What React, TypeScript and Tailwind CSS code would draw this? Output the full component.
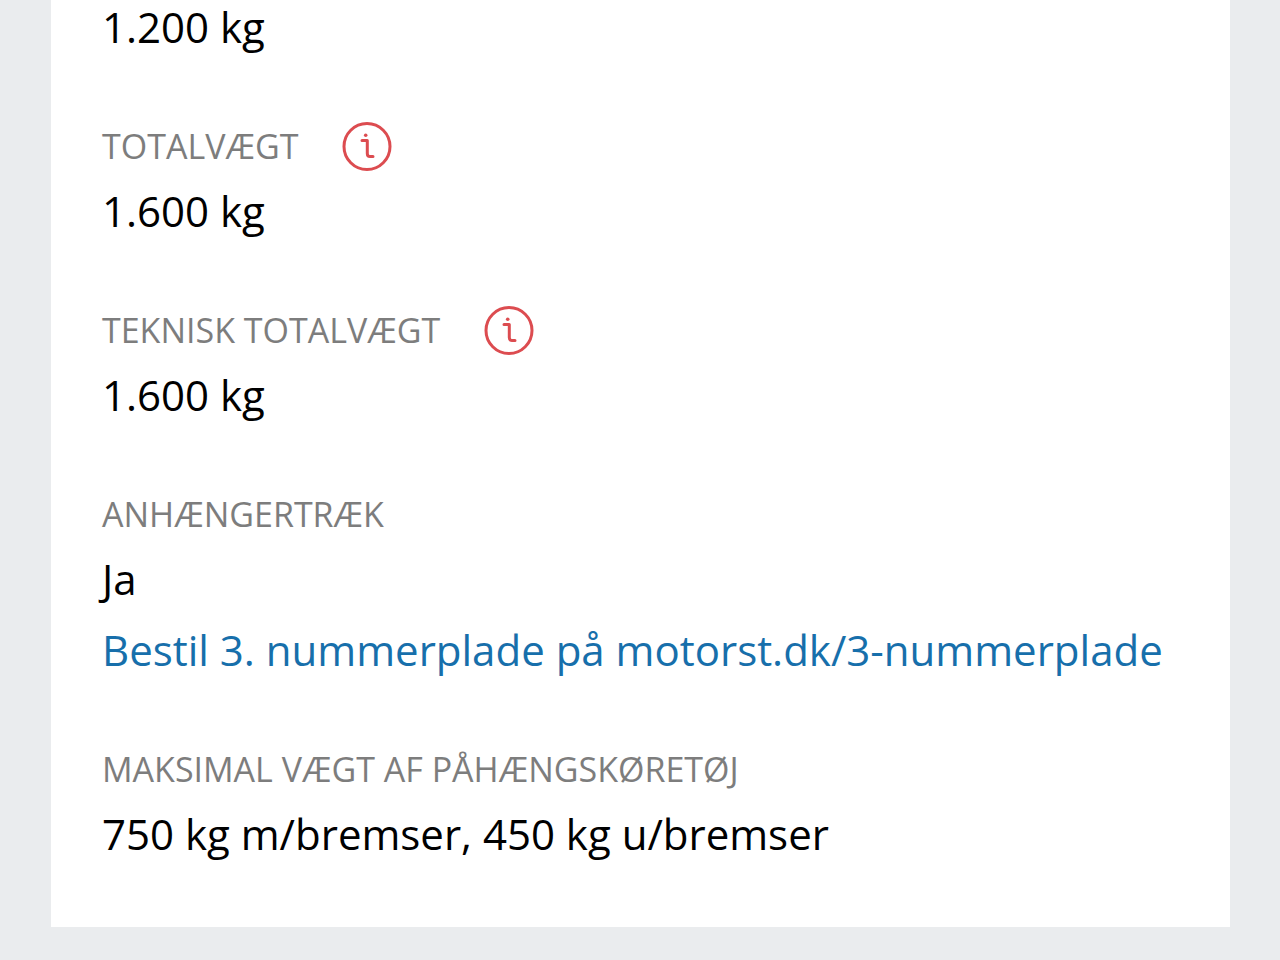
interface Field {
  id: string;
  label: string;
  value: string;
  hasInfo?: boolean;
  link?: { text: string; href: string };
}

const fields: Field[] = [
  { id: 'totalvaegt', label: 'Totalvægt', value: '1.600 kg', hasInfo: true },
  { id: 'teknisk-totalvaegt', label: 'Teknisk totalvægt', value: '1.600 kg', hasInfo: true },
  {
    id: 'anhaengertraek',
    label: 'Anhængertræk',
    value: 'Ja',
    link: {
      text: 'Bestil 3. nummerplade på motorst.dk/3-nummerplade',
      href: 'https://motorst.dk/3-nummerplade',
    },
  },
  {
    id: 'paahaengskoeretoej',
    label: 'Maksimal vægt af påhængskøretøj',
    value: '750 kg m/bremser, 450 kg u/bremser',
  },
];

function InfoIcon() {
  return (
    <svg viewBox="0 0 50 50" className="size-[50px]" fill="none" stroke="#dc4c50" strokeWidth="3">
      <circle cx="25" cy="25.5" r="23" />
      <path d="M20 19.5h5.3v13q0 3 2.7 3h3" strokeLinecap="round" strokeLinejoin="round" />
      <circle cx="23.7" cy="14.2" r="1.8" fill="#dc4c50" stroke="none" />
    </svg>
  );
}

function FieldRow({ field }: { field: Field }) {
  return (
    <div>
      <dt className="flex min-h-[50px] items-center gap-11 text-[34px] leading-[50px] text-[#7d7d7d] uppercase">
        {field.label}
        {field.hasInfo && (
          <button type="button" aria-label={field.label} className="shrink-0">
            <InfoIcon />
          </button>
        )}
      </dt>
      <dd className="mt-1 text-[42px] leading-[71px] text-black">
        {field.value}
        {field.link && (
          <a href={field.link.href} className="block text-[#176fab]">
            {field.link.text}
          </a>
        )}
      </dd>
    </div>
  );
}

export default function App() {
  return (
    <main className="min-h-screen bg-[#eaecee] pr-[50px] pb-[33px] pl-[51px] font-['Open_Sans',sans-serif]">
      <section className="bg-white px-[51px] pb-[58px]">
        <p className="text-[42px] leading-[54px] text-black">1.200 kg</p>
        <dl className="mt-[67px] flex flex-col gap-[59px]">
          {fields.map((field) => (
            <FieldRow key={field.id} field={field} />
          ))}
        </dl>
      </section>
    </main>
  );
}
